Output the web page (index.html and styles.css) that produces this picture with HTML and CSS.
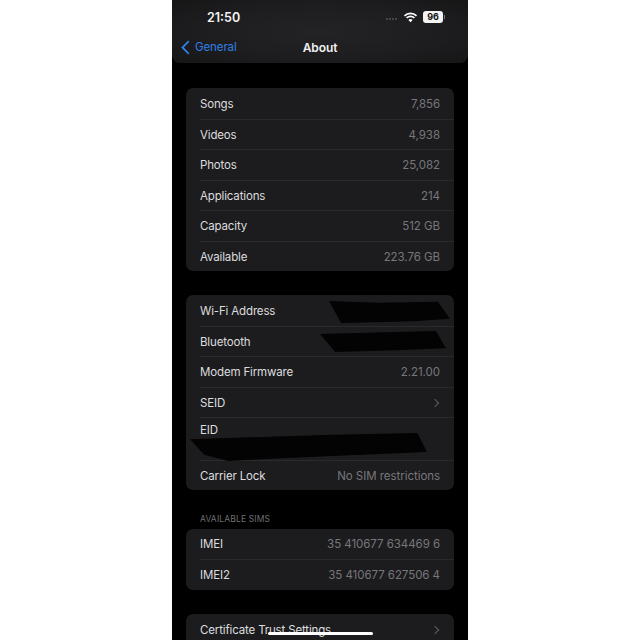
FILE: index.html
```html
<!DOCTYPE html>
<html lang="en">
<head>
    <meta charset="UTF-8">
    <meta name="viewport" content="width=device-width, initial-scale=1.0">
    <title>About</title>
    <link rel="stylesheet" href="styles.css">
</head>
<body>
    <div class="phone">
        <div class="top-bar">
            <div class="status-bar">
                <span class="time">21:50</span>
                <div class="status-icons">
                    <div class="signal"><i></i><i></i><i></i><i></i></div>
                    <svg class="wifi" width="15" height="11" viewBox="0 0 14 11">
                        <path d="M1 3.8a8.5 8.5 0 0 1 12 0M3.1 6a5.5 5.5 0 0 1 7.8 0" fill="none" stroke="#fff" stroke-width="1.7"/>
                        <path d="M7 10.3 4.9 8.1a3 3 0 0 1 4.2 0z" fill="#fff"/>
                    </svg>
                    <div class="battery">96</div>
                    <div class="battery-tip"></div>
                </div>
            </div>
            <div class="nav-bar">
                <div class="back">
                    <svg width="9" height="15" viewBox="0 0 9 15">
                        <path d="M7.8 1.2 1.5 7.5l6.3 6.3" fill="none" stroke="#2f7fe6" stroke-width="1.8"/>
                    </svg>
                    <span>General</span>
                </div>
                <div class="nav-title">About</div>
            </div>
        </div>

        <div class="content">
            <div class="card">
                <div class="row"><span>Songs</span><span class="value">7,856</span></div>
                <div class="row"><span>Videos</span><span class="value">4,938</span></div>
                <div class="row"><span>Photos</span><span class="value">25,082</span></div>
                <div class="row"><span>Applications</span><span class="value">214</span></div>
                <div class="row"><span>Capacity</span><span class="value">512 GB</span></div>
                <div class="row"><span>Available</span><span class="value">223.76 GB</span></div>
            </div>

            <div class="card card-gap">
                <div class="row"><span>Wi-Fi Address</span></div>
                <div class="row"><span>Bluetooth</span></div>
                <div class="row"><span>Modem Firmware</span><span class="value">2.21.00</span></div>
                <div class="row"><span>SEID</span><span class="chevron"></span></div>
                <div class="row row-eid"><span>EID</span></div>
                <div class="row"><span>Carrier Lock</span><span class="value">No SIM restrictions</span></div>
                <div class="scribble scribble-wifi"></div>
                <div class="scribble scribble-bt"></div>
                <div class="scribble scribble-eid"></div>
            </div>

            <div class="section-label">AVAILABLE SIMS</div>
            <div class="card">
                <div class="row"><span>IMEI</span><span class="value">35 410677 634469 6</span></div>
                <div class="row"><span>IMEI2</span><span class="value">35 410677 627506 4</span></div>
            </div>

            <div class="card card-gap-last">
                <div class="row"><span>Certificate Trust Settings</span><span class="chevron"></span></div>
            </div>
        </div>

        <div class="home-bar"></div>
    </div>
</body>
</html>
```

FILE: styles.css
```css
* {
    margin: 0;
    padding: 0;
    box-sizing: border-box;
}

body {
    font-family: Inter, Roboto, 'Liberation Sans', sans-serif;
    background: #fff;
    height: 640px;
    overflow: hidden;
    display: flex;
    justify-content: center;
}

.phone {
    position: relative;
    width: 296px;
    height: 640px;
    background: #000;
    color: #dcdcde;
    overflow: hidden;
}

/* header */
.top-bar {
    height: 63px;
    background: radial-gradient(ellipse at 50% 50%, #232325 0%, #1d1d1f 60%, #161617 100%);
    border-radius: 0 0 8px 8px;
}

.status-bar {
    height: 34px;
    padding: 0 23px 0 35px;
    display: flex;
    align-items: center;
    justify-content: space-between;
}

.time {
    font-size: 12.5px;
    font-weight: 600;
    color: #f2f2f2;
}

.status-icons {
    display: flex;
    align-items: center;
}

.signal {
    display: flex;
    gap: 1px;
    margin: 3px 6px 0 0;
}

.signal i {
    width: 2px;
    height: 2px;
    border-radius: 50%;
    background: #555;
}

.wifi {
    margin-right: 5px;
}

.battery {
    width: 20px;
    height: 12px;
    border-radius: 3px;
    background: #f4f4f4;
    color: #111;
    font-size: 9px;
    font-weight: 700;
    line-height: 12px;
    text-align: center;
}

.battery-tip {
    width: 1px;
    height: 4px;
    margin-left: 1px;
    background: #777;
}

.nav-bar {
    position: relative;
    height: 26px;
    display: flex;
    align-items: center;
    justify-content: center;
}

.back {
    position: absolute;
    left: 9px;
    top: 5.5px;
    display: flex;
    align-items: center;
    gap: 5px;
    color: #2f7fe6;
    font-size: 11.5px;
    letter-spacing: -0.1px;
}

.nav-title {
    font-size: 12px;
    font-weight: 600;
    letter-spacing: -0.1px;
    color: #f0f0f0;
}

/* list */
.content {
    padding: 25px 14px 0;
}

.card {
    position: relative;
    background: #1c1c1e;
    border-radius: 7px;
    overflow: hidden;
}

.card-gap {
    margin-top: 24px;
}

.card-gap-last {
    margin-top: 24.5px;
}

.row {
    height: 30.5px;
    margin-left: 14px;
    padding: 1px 14px 0 0;
    display: flex;
    align-items: center;
    justify-content: space-between;
    font-size: 11.5px;
    letter-spacing: -0.15px;
    border-top: 1px solid #2a2a2c;
}

.row:first-child {
    border-top: none;
}

.row-eid {
    height: 42.5px;
    align-items: flex-start;
    padding-top: 5px;
}

.value {
    color: #77777b;
    letter-spacing: -0.05px;
}

.chevron {
    width: 6px;
    height: 6px;
    margin-right: 2px;
    border-top: 1.5px solid #5e5e62;
    border-right: 1.5px solid #5e5e62;
    transform: rotate(45deg);
}

.section-label {
    margin: 24px 0 0 14px;
    height: 14.5px;
    font-size: 8.5px;
    letter-spacing: 0.15px;
    color: #6e6e72;
}

/* marker scribbles drawn over the private values */
.scribble {
    position: absolute;
    background: #030303;
    filter: blur(0.6px);
}

.scribble-wifi {
    left: 143px;
    top: 5px;
    width: 121px;
    height: 23px;
    clip-path: polygon(0 4%, 40% 12%, 90% 8%, 100% 82%, 70% 92%, 45% 96%, 10% 100%);
}

.scribble-bt {
    left: 134px;
    top: 36px;
    width: 126px;
    height: 21px;
    clip-path: polygon(0 14%, 50% 6%, 92% 0, 100% 82%, 60% 92%, 12% 100%);
}

.scribble-eid {
    left: 4px;
    top: 138px;
    width: 237px;
    height: 28px;
    clip-path: polygon(0 22%, 30% 14%, 60% 6%, 96% 0, 100% 68%, 60% 82%, 30% 94%, 16% 100%, 6% 78%);
}

.home-bar {
    position: absolute;
    left: 96px;
    bottom: 5px;
    width: 105px;
    height: 3px;
    border-radius: 2px;
    background: #fff;
}
```
